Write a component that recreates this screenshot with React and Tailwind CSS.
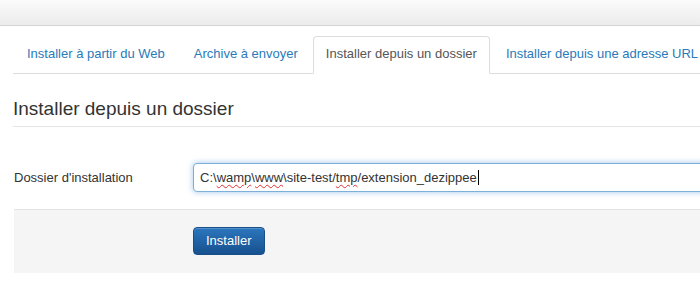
export default function App() {
  const tabs = [
    'Installer à partir du Web',
    'Archive à envoyer',
    'Installer depuis un dossier',
    'Installer depuis une adresse URL',
  ]
  const active = 2

  return (
    <div className="w-[700px] h-[300px] overflow-hidden bg-white font-['Liberation_Sans',Arial,sans-serif] text-[13px] text-[#333]">
      {/* top toolbar strip */}
      <div className="h-[26px] bg-gradient-to-b from-[#fbfbfb] to-[#ececec] border-b border-[#d4d4d4]" />

      <div className="pl-[13px]">
        {/* tabs */}
        <div className="mt-[10px] flex border-b border-[#ddd] whitespace-nowrap">
          {tabs.map((t, i) => (
            <div
              key={t}
              className={
                i === active
                  ? 'mr-[2px] -mb-px pl-[12px] pr-[12px] pt-[8px] pb-[9px] leading-[18px] rounded-t-[4px] border border-[#ddd] border-b-white bg-white text-[#555]'
                  : 'mr-[2px] pl-[13px] pr-[12px] pt-[8px] pb-[9px] leading-[18px] border border-transparent text-[#2a7ab9]'
              }
            >
              {t}
            </div>
          ))}
        </div>

        {/* heading */}
        <h3 className="mt-[23px] pb-[5px] text-[19px] leading-[24px] font-normal text-[#333] border-b border-[#e5e5e5] whitespace-nowrap">
          Installer depuis un dossier
        </h3>

        {/* field */}
        <div className="mt-[36px] flex items-center">
          <label className="w-[180px] pl-px">Dossier d'installation</label>
          <div className="flex-1 h-[29px] -mr-4 flex items-center pl-[6px] rounded-l-[4px] border border-[#7cb0d9] shadow-[0_0_6px_rgba(102,160,220,0.6)] bg-white whitespace-nowrap">
            <span>C:\</span>
            <span className="underline decoration-wavy decoration-[#e03030] decoration-1 underline-offset-2">wamp</span>
            <span>\</span>
            <span className="underline decoration-wavy decoration-[#e03030] decoration-1 underline-offset-2">www</span>
            <span>\site-test/</span>
            <span className="underline decoration-wavy decoration-[#e03030] decoration-1 underline-offset-2">tmp</span>
            <span>/extension_dezippee</span>
            <span className="ml-px w-px h-[15px] bg-black" />
          </div>
        </div>

        {/* form actions */}
        <div className="mt-[17px] ml-px h-[64px] bg-[#f5f5f5] border-t border-[#e3e3e3] flex items-center pl-[179px]">
          <button className="-mt-[2px] h-[28px] px-[12px] rounded-[4px] border border-[#174f8a] bg-gradient-to-b from-[#2c76bd] to-[#17518f] text-white text-[13px] shadow-[inset_0_1px_0_rgba(255,255,255,0.2)]">
            Installer
          </button>
        </div>
      </div>
    </div>
  )
}
